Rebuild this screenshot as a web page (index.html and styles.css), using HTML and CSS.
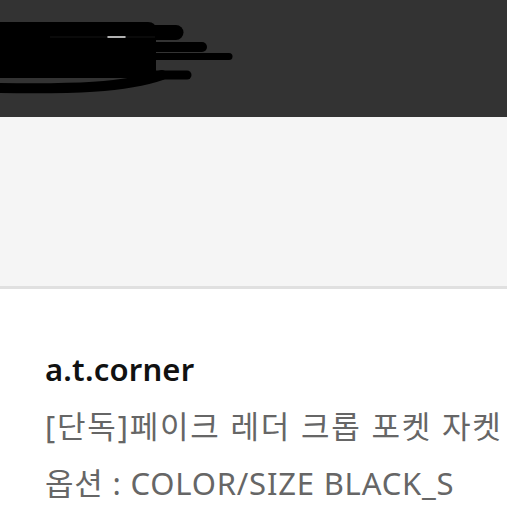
FILE: index.html
```html
<!DOCTYPE html>
<html lang="ko">
<head>
    <meta charset="UTF-8">
    <meta name="viewport" content="width=device-width, initial-scale=1.0">
    <title>주문 상품</title>
    <link rel="stylesheet" href="styles.css">
</head>
<body>
    <div class="top">
        <!-- 가려진 부분 -->
        <svg class="scribble" width="240" height="100" viewBox="0 0 240 100">
            <path d="M0 22 L148 22 Q156 22 156 30 L156 78 L0 78 Z" fill="#000"/>
            <path d="M0 32.5 L176 32.5" stroke="#000" stroke-width="15" stroke-linecap="round" fill="none"/>
            <path d="M0 47 L202 47" stroke="#000" stroke-width="10" stroke-linecap="round" fill="none"/>
            <path d="M150 56.5 L229 56.5" stroke="#000" stroke-width="7" stroke-linecap="round" fill="none"/>
            <path d="M150 75 L187 75" stroke="#000" stroke-width="9" stroke-linecap="round" fill="none"/>
            <path d="M0 88 C70 89 125 88 162 75" stroke="#000" stroke-width="10" stroke-linecap="round" fill="none"/>
            <path d="M50 37 L155 37" stroke="#141414" stroke-width="1" fill="none"/>
            <path d="M108 37 L125 37" stroke="#e8e8e8" stroke-width="1.5" stroke-linecap="round" fill="none"/>
        </svg>
    </div>
    <div class="blank"></div>
    <div class="item">
        <p class="brand">a.t.corner</p>
        <p class="name">[단독]페이크 레더 크롭 포켓 자켓</p>
        <p class="option">옵션 : COLOR/SIZE BLACK_S</p>
    </div>
</body>
</html>
```

FILE: styles.css
```css
body{
    margin: 0;
    font-family: "Noto Sans", "Noto Sans CJK KR", sans-serif;
    background: #fff;
    overflow: hidden;
}
.top{
    height: 117px;
    background-color: #333333;
}
.scribble{
    display: block;
}
.blank{
    height: 169px;
    background-color: #f5f5f5;
    border-bottom: 3px solid #e0e0e0;
}
.item{
    padding: 52px 0 0 45px;
}
.item p{
    margin: 0;
    font-size: 31px;
    line-height: 57px;
    white-space: nowrap;
}
.brand{
    font-weight: 600;
    color: #111;
    letter-spacing: 0.2px;
}
.name{
    color: #666;
    letter-spacing: 1.8px;
}
.option{
    color: #666;
    letter-spacing: 0.8px;
}
```
